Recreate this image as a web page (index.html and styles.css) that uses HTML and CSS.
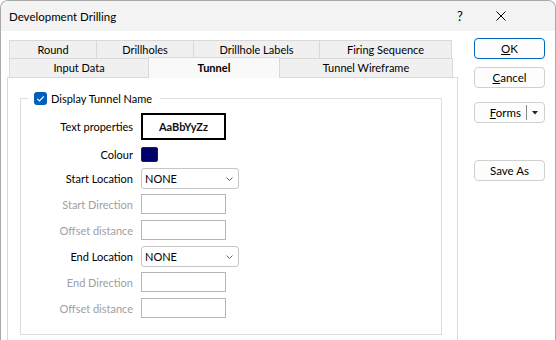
FILE: index.html
```html
<!DOCTYPE html>
<html lang="en">

<head>
  <meta charset="UTF-8">
  <meta name="viewport" content="width=device-width, initial-scale=1.0">
  <title>Development Drilling</title>
  <link rel="stylesheet" href="styles.css">
</head>

<body>
  <div class="window">
    <div class="titlebar">
      <span class="title">Development Drilling</span>
      <span class="help">?</span>
      <span class="close">
        <svg width="10" height="10" viewBox="0 0 10 10">
          <path d="M0.5 0.5 L9.5 9.5 M9.5 0.5 L0.5 9.5" stroke="#000" stroke-width="1" fill="none" />
        </svg>
      </span>
    </div>

    <div class="main">
      <div class="tabs-area">
        <div class="tab-row back">
          <div class="tab w-round">Round</div>
          <div class="tab w-holes">Drillholes</div>
          <div class="tab w-labels">Drillhole Labels</div>
          <div class="tab w-firing">Firing Sequence</div>
        </div>
        <div class="tab-row front">
          <div class="tab w-input">Input Data</div>
          <div class="tab w-tunnel active">Tunnel</div>
          <div class="tab w-wire">Tunnel Wireframe</div>
        </div>

        <div class="panel">
          <fieldset class="group">
            <legend>
              <span class="check">
                <svg width="13" height="13" viewBox="0 0 13 13">
                  <path d="M3.3 6.8 L5.5 9 L9.8 4.3" stroke="#fff" stroke-width="1.2" fill="none" />
                </svg>
              </span>
              <span>Display Tunnel Name</span>
            </legend>

            <div class="row r-text">
              <span class="label">Text properties</span>
              <div class="font-box">AaBbYyZz</div>
            </div>
            <div class="row r-colour">
              <span class="label">Colour</span>
              <div class="swatch"></div>
            </div>
            <div class="row r-select">
              <span class="label">Start Location</span>
              <div class="select">
                <span>NONE</span>
                <svg width="7" height="4" viewBox="0 0 7 4">
                  <path d="M0.5 0.5 L3.5 3.5 L6.5 0.5" stroke="#606060" stroke-width="1" fill="none" />
                </svg>
              </div>
            </div>
            <div class="row r-field">
              <span class="label off">Start Direction</span>
              <div class="field"></div>
            </div>
            <div class="row">
              <span class="label off">Offset distance</span>
              <div class="field"></div>
            </div>
            <div class="row">
              <span class="label">End Location</span>
              <div class="select">
                <span>NONE</span>
                <svg width="7" height="4" viewBox="0 0 7 4">
                  <path d="M0.5 0.5 L3.5 3.5 L6.5 0.5" stroke="#606060" stroke-width="1" fill="none" />
                </svg>
              </div>
            </div>
            <div class="row r-field">
              <span class="label off">End Direction</span>
              <div class="field"></div>
            </div>
            <div class="row">
              <span class="label off">Offset distance</span>
              <div class="field"></div>
            </div>
          </fieldset>
        </div>
      </div>

      <div class="actions">
        <button class="btn default"><span><u>O</u>K</span></button>
        <button class="btn cancel"><span><u>C</u>ancel</span></button>
        <button class="btn forms">
          <span class="forms-label"><u>F</u>orms</span>
          <span class="divider"></span>
          <svg width="6" height="4" viewBox="0 0 6 4">
            <path d="M0 0 L6 0 L3 3.5 Z" fill="#222" />
          </svg>
        </button>
        <button class="btn save">Save As</button>
      </div>
    </div>
  </div>
</body>

</html>
```

FILE: styles.css
```css
* {
  box-sizing: border-box;
}

body {
  margin: 0;
  font-family: Lato, 'Liberation Sans', sans-serif;
  font-size: 11px;
  color: #000;
  background: #fff;
}

.window {
  width: 556px;
  height: 340px;
  overflow: hidden;
  border: 1px solid #a9a9a9;
  border-bottom: none;
  border-radius: 8px 8px 0 0;
  background: #fff;
}

.titlebar {
  height: 30px;
  display: flex;
  align-items: center;
  padding-left: 8px;
  padding-right: 33px;
  font-size: 11.5px;
  background: #f3f3f3;
}

.title {
  flex: 1;
}

.help {
  width: 40px;
  text-align: center;
  font-size: 13px;
}

.close {
  width: 42px;
  display: flex;
  justify-content: center;
}

.main {
  display: flex;
  padding-top: 7px;
}

.tabs-area {
  width: 451px;
  margin-left: 6px;
  padding-top: 2px;
}

.tab-row {
  display: flex;
  align-items: flex-start;
  margin-left: 2px;
}

.tab {
  height: 18px;
  line-height: 17px;
  margin-right: -1px;
  text-align: center;
  background: #f0f0f0;
  border: 1px solid #d9d9d9;
  border-bottom: none;
}

.front .tab {
  height: 19px;
  line-height: 18px;
}

.front .tab.active {
  position: relative;
  z-index: 1;
  height: 21px;
  line-height: 20px;
  margin-top: -1px;
  margin-bottom: -1px;
  font-weight: bold;
  background: #f9f9f9;
}

.w-round { width: 88px; }
.w-holes { width: 98px; }
.w-labels { width: 127px; }
.w-firing { width: 133px; }
.w-input { width: 140px; }
.w-tunnel { width: 132px; }
.w-wire { width: 174px; }

.panel {
  height: 270px;
  padding: 0 15px 0 12px;
  background: #fff;
  border: 1px solid #d9d9d9;
}

.group {
  margin: 14px 0 0;
  padding: 8px 0 16px;
  min-width: 0;
  border: 1px solid #dcdcdc;
}

.group legend {
  display: flex;
  align-items: center;
  gap: 4px;
  height: 13px;
  line-height: 13px;
  margin-left: 7px;
  padding: 0 8px 0 6px;
}

.check {
  display: flex;
  width: 13px;
  height: 13px;
  border-radius: 3px;
  background: #005fb8;
}

.row {
  display: flex;
  align-items: center;
  margin-top: 6px;
}

.row.r-text {
  margin-top: 0;
}

.row.r-colour {
  margin-top: 7px;
}

.row.r-field {
  margin-top: 5px;
}

.label {
  width: 112px;
  margin-right: 8px;
  text-align: right;
}

.label.off {
  color: #a0a0a0;
}

.font-box {
  display: flex;
  align-items: center;
  justify-content: center;
  width: 85px;
  height: 27px;
  font-size: 11px;
  font-weight: bold;
  color: #111;
  border: 2px solid #000;
}

.swatch {
  width: 17px;
  height: 15px;
  background: #00006b;
  border: 1px solid #222;
  border-radius: 2px;
}

.select {
  display: flex;
  align-items: center;
  justify-content: space-between;
  width: 98px;
  height: 21px;
  padding: 0 5px 0 3px;
  background: #fff;
  border: 1px solid #c6c6c6;
  border-radius: 3px;
}

.field {
  width: 85px;
  height: 20px;
  border: 1px solid #b6b6b6;
}

.actions {
  display: flex;
  flex-direction: column;
  width: 71px;
  margin-left: 16px;
}

.btn {
  display: flex;
  align-items: center;
  justify-content: center;
  height: 21px;
  padding: 0;
  font-family: inherit;
  font-size: 11.5px;
  color: #000;
  background: #fdfdfd;
  border: 1px solid #d0d0d0;
  border-radius: 4px;
}

.btn.default {
  border-color: #0067c0;
}

.btn.cancel {
  margin-top: 8px;
}

.btn.forms {
  margin-top: 14px;
  justify-content: flex-end;
  padding-right: 6px;
}

.forms-label {
  margin-right: 5px;
}

.divider {
  width: 1px;
  height: 15px;
  margin-right: 5px;
  background: #8a8a8a;
}

.btn.save {
  margin-top: 37px;
}
```
